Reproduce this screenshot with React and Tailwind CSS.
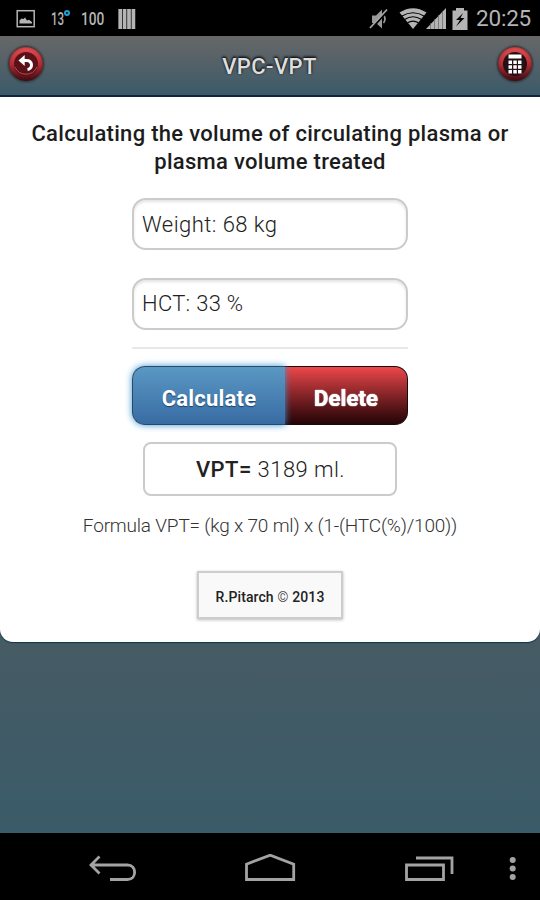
import React from "react";

function StatusBar() {
  return (
    <div className="flex h-9 shrink-0 items-center bg-black pt-px text-[#b4b4b4]">
      <svg className="ml-4 h-5 w-5" viewBox="0 0 20 20">
        <rect x="1.2" y="1.7" width="17" height="16" fill="none" stroke="currentColor" strokeWidth="1.5" />
        <path d="M3.500 14.500V11.500l2-2 2 .5 1.500-1.500 2 3 2-.8 3 2.300v1.500z" fill="currentColor" />
      </svg>
      <span className="ml-[15px] flex w-[20px] text-[18px] font-medium whitespace-nowrap">
        <span className="w-[13px] origin-left scale-x-[0.64]">13</span>
        <span className="mt-[5px] h-[6px] w-[6px] rounded-full border-2 border-[#229dd8]" />
      </span>
      <span className="ml-[10px] w-[24px] origin-left scale-x-[0.76] text-[18px] font-medium">100</span>
      <svg className="ml-[13px] h-[22px] w-[18px]" viewBox="0 0 18 22">
        <path d="M2.2 1v20M6.600 1v20M11 1v20M15.400 1v20" stroke="currentColor" strokeWidth="3.700" />
      </svg>
      <div className="flex-1" />
      <svg className="h-6 w-5" viewBox="0 0 20 24">
        <path d="M3 8.500h4l6-6v19l-6-5.500H3z" fill="#999" />
        <path d="M14.500 8q3 4 0 8" fill="none" stroke="#999" strokeWidth="1.7" />
        <path d="M2.500 21.500 19 3.500" stroke="#000" strokeWidth="2" />
        <path d="M1 21 18 2.500" stroke="#a5a5a5" strokeWidth="1.8" />
      </svg>
      <svg className="ml-[10px] h-6 w-7" viewBox="0 0 28 24">
        <path d="M.5 5.5Q14-3 27.500 5.500L14 22z" fill="currentColor" />
        <path d="M2.500 9.300Q14 2.200 25.500 9.300M5.500 12.500Q14 7 22.500 12.500M8.500 15.800Q14 12.500 19.500 15.800" fill="none" stroke="#000" strokeWidth="1.1" />
      </svg>
      <svg className="-ml-px h-6 w-[21px]" viewBox="0 0 21 24">
        <path d="M0 22 20 1v21z" fill="currentColor" />
        <path d="M4.500 16v6M8.500 12v10M12.500 8v14M16.500 4v18" stroke="#666" strokeWidth=".7" />
      </svg>
      <svg className="ml-[5px] h-6 w-4" viewBox="0 0 16 24">
        <path d="M.500 3.500H4V1h8v2.500h3.500V23H.500z" fill="currentColor" />
        <path d="M11 6 4 13h4l-4 6.500 8.500-8.500H8.500z" fill="#000" />
      </svg>
      <span className="ml-2 w-14 text-[22.500px] tracking-[-0.2px]">20:25</span>
      <div className="w-2" />
    </div>
  );
}

function RoundButton({ label, children }) {
  return (
    <button aria-label={label} className="flex h-[36px] w-[36px] items-center justify-center rounded-full border border-[#343b40] bg-linear-to-b from-[#e64c51] via-[#b52d34] to-[#3f0a10] shadow-[0_0_2px_#222,inset_0_0_2px_#222]">
      {children}
    </button>
  );
}

function Header() {
  return (
    <header className="flex h-[61px] shrink-0 items-center justify-between border-b-2 border-[#10243c] bg-linear-to-b from-[#676767] to-[#3b5a69] pr-[7px] pb-[3px] pl-2">
      <RoundButton label="Back">
        <svg className="h-[28px] w-[28px]" viewBox="0 0 28 28">
          <circle cx="14" cy="14" r="12" fill="#5b1118" />
          <path d="M3 17a12 12 0 0 0 22 0" fill="none" stroke="#b54a50" strokeWidth="1" />
          <path d="M11 10.500h3.500a4.500 4.500 0 0 1 1 9" fill="none" stroke="#fff" strokeWidth="3" />
          <path d="M12.700 5v11L6.500 10.500z" fill="#fff" />
        </svg>
      </RoundButton>
      <h1 className="mt-[4px] mr-[2px] text-[22px] font-medium tracking-[0.4px] text-[#dedede] [text-shadow:0_-1px_2px_#111,0_-1px_3px_#111]">VPC-VPT</h1>
      <RoundButton label="Calculator">
        <svg className="h-[28px] w-[28px]" viewBox="0 0 28 28">
          <circle cx="14" cy="14" r="12" fill="#241015" />
          <path d="M7.500 4.500h13v4h-13zM7.500 10.500H11V14H7.500zM12.300 10.500h3.500V14h-3.500zM17 10.500h3.500V14H17zM7.500 15.200H11v3.500H7.500zM12.300 15.200h3.500v3.500h-3.500zM17 15.200h3.500v3.500H17zM7.500 20H11v3.500H7.500zM12.300 20h3.500v3.500h-3.500zM17 20h3.500v3.500H17z" fill="#fff" />
        </svg>
      </RoundButton>
    </header>
  );
}

function Field({ children }) {
  return (
    <div className="flex h-[52px] w-[276px] items-center rounded-[14px] border-2 border-[#cbcbcb] bg-white pt-px pl-[8px] text-[22px] text-[#222] shadow-[inset_0_2px_3px_#e4e4e4]">
      {children}
    </div>
  );
}

function Card() {
  return (
    <main className="flex h-[545px] shrink-0 flex-col items-center rounded-b-[13px] bg-white shadow-[0_1px_1px_#103448]">
      <h2 className="mt-[23px] text-center text-[22px] leading-7 font-medium whitespace-nowrap text-[#1c1c1c]">
        <span className="tracking-[0.3px]">Calculating the volume of circulating plasma or</span><br />
        <span className="tracking-[0.3px]">plasma volume treated</span>
      </h2>
      <div className="mt-[22px] flex flex-col gap-7">
        <Field><span className="font-light tracking-[0.45px]">Weight: 68 kg</span></Field>
        <Field><span className="-mt-[2px] font-light tracking-[0.3px]">HCT: 33 %</span></Field>
      </div>
      <div className="mt-[17px] h-[2px] w-[276px] bg-[#e8e8e8]" />
      <div className="mt-[17px] flex h-[59px] w-[276px] text-[22px] font-bold text-white">
        <button className="z-10 w-[153px] rounded-l-[13px] border border-r-0 border-[#254b69] bg-linear-to-b from-[#5b98c3] to-[#386ca4] pt-[5px] tracking-[0.2px] shadow-[0_0_7px_#3b94d0] [text-shadow:0_1px_1px_#17436b]">Calculate</button>
        <button className="w-[123px] rounded-r-[13px] border border-l-0 border-[#160c0d] bg-linear-to-b from-[#ee484b] to-[#260507] pt-[5px] tracking-[0.1px] [text-shadow:0_0_1px_#fff,0_0_1px_#fff]">Delete</button>
      </div>
      <div className="mt-[17px] flex h-[54px] w-[254px] items-center justify-center rounded-[8px] border-2 border-[#cbcbcb] pl-px text-[22px] text-[#222]">
        <p className="font-light tracking-[0.45px] whitespace-nowrap"><span className="font-medium">VPT=</span> 3189 ml.</p>
      </div>
      <p className="mt-[15px] text-[19px] leading-[30px] font-light tracking-[-0.18px] whitespace-nowrap text-[#333]">Formula VPT= (kg x 70 ml) x (1-(HTC(%)/100))</p>
      <div className="mt-[30px] flex h-[48px] w-[146px] items-center justify-center border-2 border-[#cdcdcd] bg-[#f9f9f9] pt-[5px] text-[14px] font-medium text-[#222] shadow-[0_1px_3px_#bbb]">
        <span className="tracking-[0.1px] whitespace-nowrap">R.Pitarch <span className="font-light">©</span> 2013</span>
      </div>
    </main>
  );
}

function NavigationBar() {
  return (
    <nav className="flex h-[67px] shrink-0 items-center bg-black pt-[5px] text-[#a3a3a3]">
      <svg className="ml-[88px] h-[30px] w-[50px]" viewBox="0 0 50 30" fill="none" stroke="currentColor" strokeWidth="2.8">
        <path d="M11.500 2.500 3 11l8.500 8.500M3 11h36.500c9.500 0 9.500 14.500 0 14.500H22" />
      </svg>
      <svg className="ml-[106px] h-[30px] w-[54px]" viewBox="0 0 54 30" fill="none" stroke="currentColor" strokeWidth="2.8">
        <path d="M2.500 25.500V10.200L26.200 1.200l23.500 9v15.300z" />
      </svg>
      <svg className="ml-[106px] h-[30px] w-[50px]" viewBox="0 0 50 30" fill="none" stroke="currentColor" strokeWidth="2.800">
        <path d="M2.500 11h37v14.500h-37zM12 4h36v16" />
      </svg>
      <svg className="ml-[55px] h-[30px] w-2" viewBox="0 0 8 30" fill="currentColor">
        <circle cx="3.700" cy="6" r="3" /><circle cx="3.700" cy="14.500" r="3" /><circle cx="3.700" cy="23" r="3" />
      </svg>
    </nav>
  );
}

export default function App() {
  return (
    <div className="flex h-[900px] w-[540px] flex-col overflow-hidden bg-[#435c67] font-[Roboto,sans-serif]">
      <StatusBar />
      <Header />
      <div className="flex-1 bg-linear-to-b from-[#536067] from-0% via-[#465b64] via-[74%] to-[#3a5b69] to-100%">
        <Card />
      </div>
      <NavigationBar />
    </div>
  );
}
